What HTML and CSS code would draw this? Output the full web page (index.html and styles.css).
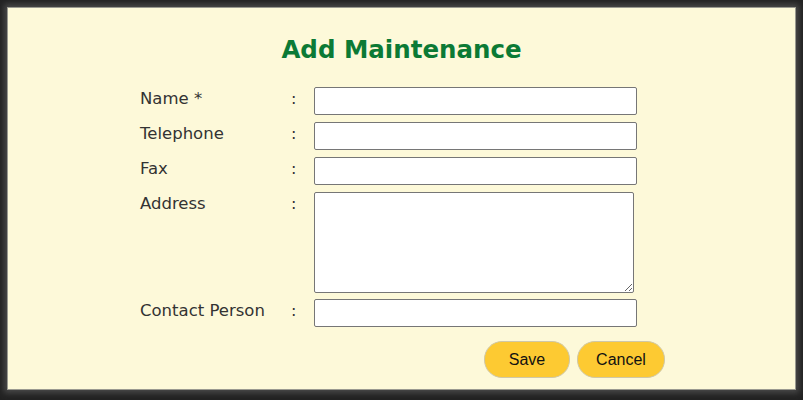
FILE: index.html
```html
<!DOCTYPE html>
<html lang="en">
<head>
<meta charset="utf-8">
<title>Add Maintenance</title>
<link rel="stylesheet" href="styles.css">
</head>
<body>
<div class="modal">
  <h2 class="title">Add Maintenance</h2>
  <form class="form">
    <label class="label" for="name">Name *</label><span class="colon">:</span><input class="field" id="name" type="text">
    <label class="label" for="tel">Telephone</label><span class="colon">:</span><input class="field" id="tel" type="text">
    <label class="label" for="fax">Fax</label><span class="colon">:</span><input class="field" id="fax" type="text">
    <label class="label" for="addr">Address</label><span class="colon">:</span><textarea class="area" id="addr"></textarea>
    <label class="label" for="contact">Contact Person</label><span class="colon">:</span><input class="field" id="contact" type="text">
    <div class="actions">
      <button class="btn" type="button">Save</button>
      <button class="btn btn-cancel" type="button">Cancel</button>
    </div>
  </form>
</div>
</body>
</html>
```
FILE: styles.css
```css
html, body {
  margin: 0;
  height: 100%;
}
body {
  background: #222;
  padding: 7px 7px 10px;
  box-sizing: border-box;
  font-family: "DejaVu Sans", Verdana, sans-serif;
}
.modal {
  height: 100%;
  box-sizing: border-box;
  background: #fdf9d9;
  border: 1px solid #9a9a90;
  box-shadow: 0 0 6px 3px #4a4a4a;
  padding-top: 28px;
}
.title {
  margin: 0 0 23px;
  text-align: center;
  font-size: 24.5px;
  line-height: 28px;
  font-weight: bold;
  color: #0b7a35;
}
.form {
  display: grid;
  grid-template-columns: 151px 23px 323px;
  row-gap: 7px;
  margin-left: 132px;
  align-items: start;
}
.label, .colon {
  font-size: 16.5px;
  line-height: 19px;
  padding-top: 2px;
  color: #333;
}
.colon {
  font-size: 16px;
}
.field {
  box-sizing: border-box;
  width: 323px;
  height: 28px;
  margin: 0;
  border: 1px solid #767676;
  border-radius: 2px;
  background: #fff;
  padding: 2px 4px;
  font-size: 14px;
}
.area {
  box-sizing: border-box;
  width: 320px;
  height: 101px;
  margin: 0 0 -1px;
  border: 1px solid #767676;
  border-radius: 2px;
  background: #fff;
  display: block;
  font-size: 14px;
}
.actions {
  grid-column: 3;
  display: flex;
  gap: 7px;
  margin: 7px 0 0 170px;
}
.btn {
  box-sizing: border-box;
  min-width: 86px;
  height: 37px;
  padding: 1px 18px 0;
  border: 1px solid #cfc8a8;
  border-radius: 18px;
  background: #fdca32;
  color: #111;
  font-family: "Liberation Sans", Arial, sans-serif;
  font-size: 16px;
}
.btn-cancel {
  min-width: 88px;
}
```
